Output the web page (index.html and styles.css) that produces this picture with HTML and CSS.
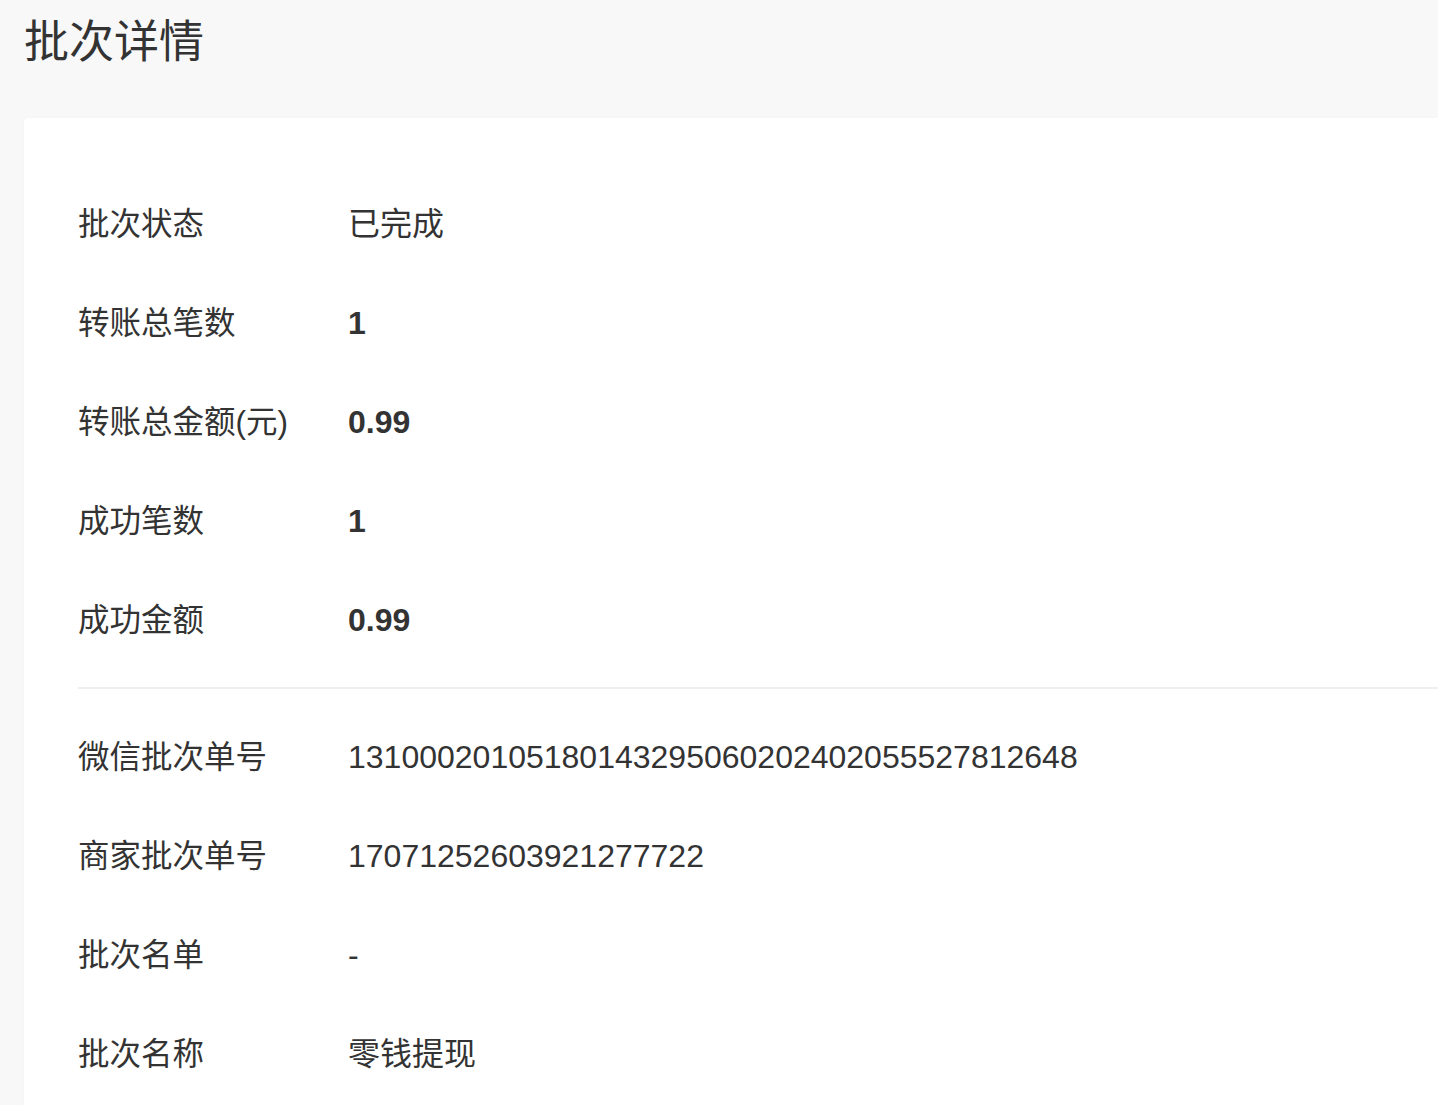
FILE: index.html
```html
<!DOCTYPE html>
<html lang="zh-CN">
<head>
    <meta charset="UTF-8">
    <meta name="viewport" content="width=device-width, initial-scale=1.0">
    <title>批次详情</title>
    <link rel="stylesheet" href="styles.css">
</head>
<body>
    <div class="page">
        <h1 class="page-title">批次详情</h1>

        <div class="card">
            <div class="section">
                <div class="row">
                    <div class="label">批次状态</div>
                    <div class="value">已完成</div>
                </div>
                <div class="row">
                    <div class="label">转账总笔数</div>
                    <div class="value bold">1</div>
                </div>
                <div class="row">
                    <div class="label">转账总金额(元)</div>
                    <div class="value bold">0.99</div>
                </div>
                <div class="row">
                    <div class="label">成功笔数</div>
                    <div class="value bold">1</div>
                </div>
                <div class="row">
                    <div class="label">成功金额</div>
                    <div class="value bold">0.99</div>
                </div>
            </div>

            <div class="divider"></div>

            <div class="section">
                <div class="row">
                    <div class="label">微信批次单号</div>
                    <div class="value">13100020105180143295060202402055527812648</div>
                </div>
                <div class="row">
                    <div class="label">商家批次单号</div>
                    <div class="value">17071252603921277722</div>
                </div>
                <div class="row">
                    <div class="label">批次名单</div>
                    <div class="value">-</div>
                </div>
                <div class="row">
                    <div class="label">批次名称</div>
                    <div class="value">零钱提现</div>
                </div>
            </div>
        </div>
    </div>
</body>
</html>
```

FILE: styles.css
```css
* {
    margin: 0;
    padding: 0;
    box-sizing: border-box;
    font-family: "Liberation Sans", "Noto Sans CJK SC", sans-serif;
}

html, body {
    background-color: #f8f8f8;
    color: #333;
    overflow: hidden;
}

.page {
    padding: 20px 0 0 24px;
}

.page-title {
    font-size: 45px;
    font-weight: normal;
    line-height: 45px;
    color: #333;
}

.card {
    margin-top: 53px;
    background-color: #fff;
    border-radius: 4px 0 0 0;
    box-shadow: 0 0 3px rgba(0, 0, 0, 0.03);
    padding: 56px 0 40px 54px;
}

.row {
    display: grid;
    grid-template-columns: 270px 1fr;
    align-items: center;
    height: 99px;
}

.label {
    font-size: 31.5px;
    line-height: 40px;
    color: #333;
}

.value {
    font-size: 32px;
    line-height: 40px;
    color: #333;
}

.value.bold {
    font-weight: bold;
}

.divider {
    height: 2px;
    background-color: #eeeeee;
    margin: 18px 0;
}
```
